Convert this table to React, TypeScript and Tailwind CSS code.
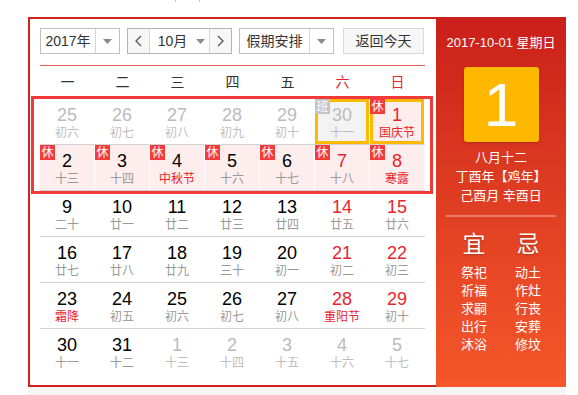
import React from "react";

type Cell = {
  d: string;
  l: string;
  o?: boolean;
  red?: boolean;
  fest?: boolean;
  badge?: "休" | "班";
  bg?: "pink" | "gray";
  sel?: boolean;
};

const rows: Cell[][] = [
  [
    { d: "25", l: "初六", o: true },
    { d: "26", l: "初七", o: true },
    { d: "27", l: "初八", o: true },
    { d: "28", l: "初九", o: true },
    { d: "29", l: "初十", o: true },
    { d: "30", l: "十一", o: true, badge: "班", bg: "gray", sel: true },
    { d: "1", l: "国庆节", red: true, fest: true, badge: "休", bg: "pink", sel: true },
  ],
  [
    { d: "2", l: "十三", badge: "休", bg: "pink" },
    { d: "3", l: "十四", badge: "休", bg: "pink" },
    { d: "4", l: "中秋节", fest: true, badge: "休", bg: "pink" },
    { d: "5", l: "十六", badge: "休", bg: "pink" },
    { d: "6", l: "十七", badge: "休", bg: "pink" },
    { d: "7", l: "十八", red: true, badge: "休", bg: "pink" },
    { d: "8", l: "寒露", red: true, fest: true, badge: "休", bg: "pink" },
  ],
  [
    { d: "9", l: "二十" },
    { d: "10", l: "廿一" },
    { d: "11", l: "廿二" },
    { d: "12", l: "廿三" },
    { d: "13", l: "廿四" },
    { d: "14", l: "廿五", red: true },
    { d: "15", l: "廿六", red: true },
  ],
  [
    { d: "16", l: "廿七" },
    { d: "17", l: "廿八" },
    { d: "18", l: "廿九" },
    { d: "19", l: "三十" },
    { d: "20", l: "初一" },
    { d: "21", l: "初二", red: true },
    { d: "22", l: "初三", red: true },
  ],
  [
    { d: "23", l: "霜降", fest: true },
    { d: "24", l: "初五" },
    { d: "25", l: "初六" },
    { d: "26", l: "初七" },
    { d: "27", l: "初八" },
    { d: "28", l: "重阳节", red: true, fest: true },
    { d: "29", l: "初十", red: true },
  ],
  [
    { d: "30", l: "十一" },
    { d: "31", l: "十二" },
    { d: "1", l: "十三", o: true },
    { d: "2", l: "十四", o: true },
    { d: "3", l: "十五", o: true },
    { d: "4", l: "十六", o: true },
    { d: "5", l: "十七", o: true },
  ],
];

const FONT = { fontFamily: '"Liberation Sans", Arial, "Noto Sans CJK SC", sans-serif' };

function Caret() {
  return (
    <svg width="9" height="5" viewBox="0 0 9 5">
      <path d="M0 0 L9 0 L4.5 5 Z" fill="#8a8a8a" />
    </svg>
  );
}

function Chevron({ dir }: { dir: "l" | "r" }) {
  return (
    <svg width="7" height="12" viewBox="0 0 7 12">
      {dir === "l" ? (
        <path d="M6 1 L1 6 L6 11" fill="none" stroke="#555" strokeWidth="1.3" />
      ) : (
        <path d="M1 1 L6 6 L1 11" fill="none" stroke="#555" strokeWidth="1.3" />
      )}
    </svg>
  );
}

function DayCell({ c }: { c: Cell }) {
  const bg =
    c.bg === "pink" ? "bg-[#fdeded]" : c.bg === "gray" ? "bg-[#f3f3f3]" : "bg-white";
  const sel = c.sel ? "shadow-[inset_0_0_0_3px_#ffb900]" : "";
  const numColor = c.o ? "text-[#bbbbbb]" : c.red ? "text-[#e8242e]" : "text-black";
  const lunColor = c.fest ? "text-[#e8242e]" : c.o ? "text-[#bdbdbd]" : "text-[#999999]";
  return (
    <div className={`relative mr-px flex h-[45px] flex-col items-center ${bg} ${sel}`}>
      {c.badge === "休" && (
        <span className="absolute left-0 top-0 z-10 flex h-[15px] w-[15px] items-center justify-center bg-[#f23c3c] text-[12px] leading-none text-white">
          休
        </span>
      )}
      {c.badge === "班" && (
        <span className="absolute left-0 top-0 z-10 flex h-[15px] w-[15px] items-center justify-center bg-[#c4c4c4] text-[12px] leading-none text-white">
          班
        </span>
      )}
      <span className={`mt-[6px] text-[18px] leading-[20px] ${numColor}`}>{c.d}</span>
      <span className={`text-[12px] leading-[16px] ${lunColor}`}>{c.l}</span>
    </div>
  );
}

export default function App() {
  return (
    <div className="min-h-[395px] w-[578px] bg-white text-[#333]" style={FONT}>
      <div className="flex h-[17px]">
        <span className="ml-[175px] mt-0 h-[2px] w-px bg-[#c8c8c8]" />
        <span className="ml-[23px] mt-0 h-[2px] w-px bg-[#c8c8c8]" />
      </div>
      <div className="ml-[28px] flex h-[370px] w-[538px]">
        {/* left calendar */}
        <div className="h-full w-[408px] border-b-2 border-l-2 border-t-2 border-[#d3211c] pl-[10px] pr-[11px] pt-[9px]">
          {/* controls */}
          <div className="flex h-[26px] text-[14px]">
            <div className="flex h-[26px] w-[80px] border border-[#bfbfbf] bg-white">
              <div className="flex w-[55px] items-center justify-center border-r border-[#d6d6d6]">
                2017年
              </div>
              <div className="flex flex-1 items-center justify-center">
                <Caret />
              </div>
            </div>
            <div className="ml-[7px] flex h-[26px] w-[105px] border border-[#b4b4b4]">
              <div className="flex w-[22px] items-center justify-center border-r border-[#d6d6d6] bg-[#f7f7f7]">
                <Chevron dir="l" />
              </div>
              <div className="flex w-[59px] items-center justify-center gap-[9px] bg-white pl-[4px]">
                <span>10月</span>
                <Caret />
              </div>
              <div className="flex flex-1 items-center justify-center border-l border-[#d6d6d6] bg-[#f7f7f7]">
                <Chevron dir="r" />
              </div>
            </div>
            <div className="ml-[7px] flex h-[26px] w-[95px] border border-[#bfbfbf] bg-white">
              <div className="flex w-[70px] items-center justify-center border-r border-[#d6d6d6]">
                假期安排
              </div>
              <div className="flex flex-1 items-center justify-center">
                <Caret />
              </div>
            </div>
            <div className="ml-[9px] flex h-[26px] w-[81px] items-center justify-center border border-[#d9d9d9] bg-[#f7f7f7]">
              返回今天
            </div>
          </div>
          {/* line */}
          <div className="mt-[11px] h-px bg-[#ec5a5a]" />
          {/* weekdays */}
          <div className="grid h-[33px] grid-cols-7 items-center text-center text-[14px]">
            <span>一</span>
            <span>二</span>
            <span>三</span>
            <span>四</span>
            <span>五</span>
            <span className="text-[#e8242e]">六</span>
            <span className="text-[#e8242e]">日</span>
          </div>
          {/* days */}
          <div className="relative">
            {rows.map((r, i) => (
              <div
                key={i}
                className={`grid grid-cols-7 ${i < rows.length - 1 ? "border-b border-[#d2d2d2]" : ""}`}
              >
                {r.map((c, j) => (
                  <DayCell key={j} c={c} />
                ))}
              </div>
            ))}
            <div className="pointer-events-none absolute left-[-9px] top-[-3px] z-20 h-[98px] w-[402px] border-[3px] border-[#f03a3a]" />
          </div>
        </div>
        {/* right panel */}
        <div className="flex h-full w-[130px] flex-col items-center bg-gradient-to-b from-[#ca1e1a] to-[#f5572a] text-white">
          <div className="mt-[18px] text-[13px] leading-[16px]">2017-10-01 星期日</div>
          <div className="mt-[16px] flex h-[75px] w-[75px] items-center justify-center rounded-[3px] bg-[#ffb800] text-[62px] leading-none shadow-[0_1px_3px_rgba(120,20,0,0.35)]">
            1
          </div>
          <div className="mt-[6px] flex flex-col items-center text-[13px] leading-[19px]">
            <span>八月十二</span>
            <span>丁酉年【鸡年】</span>
            <span>己酉月 辛酉日</span>
          </div>
          <div className="mt-[10px] h-[2px] w-[110px] bg-[rgba(255,255,255,0.3)]" />
          <div className="mt-[14px] flex w-[110px] justify-between px-[15px]">
            <div className="flex flex-col items-center">
              <span className="text-[23px] leading-[26px] [text-shadow:0_1px_2px_rgba(0,0,0,0.25)]">宜</span>
              <div className="mt-[7px] flex flex-col items-center text-[13px] leading-[18px]">
                <span>祭祀</span>
                <span>祈福</span>
                <span>求嗣</span>
                <span>出行</span>
                <span>沐浴</span>
              </div>
            </div>
            <div className="flex flex-col items-center">
              <span className="text-[23px] leading-[26px] [text-shadow:0_1px_2px_rgba(0,0,0,0.25)]">忌</span>
              <div className="mt-[7px] flex flex-col items-center text-[13px] leading-[18px]">
                <span>动土</span>
                <span>作灶</span>
                <span>行丧</span>
                <span>安葬</span>
                <span>修坟</span>
              </div>
            </div>
          </div>
        </div>
      </div>
      <div className="ml-[28px] h-[8px] w-[538px] bg-[#f5f5f5]" />
    </div>
  );
}
